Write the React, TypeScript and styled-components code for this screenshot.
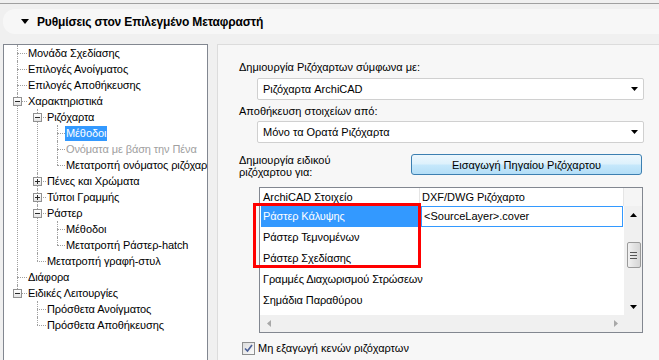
import React from 'react';
import styled, { createGlobalStyle } from 'styled-components';

const GlobalStyle = createGlobalStyle`
  html, body { margin: 0; padding: 0; background: #f0f0f0; }
  body {
    font-family: "Liberation Sans", Arial, sans-serif;
    font-size: 11px;
    color: #000;
  }
  ul { margin: 0; padding: 0; }
`;

const Page = styled.div`
  width: 659px;
  height: 360px;
  overflow: hidden;
  background: #f0f0f0;
  padding-top: 3px;
  box-sizing: border-box;
`;

const TopRule = styled.div`
  height: 1px;
  background: #a0a0a0;
`;

const HeaderBar = styled.div`
  margin: 5px 0 0 3px;
  height: 25px;
  background: #f7f7f7;
  border-radius: 12px 0 0 12px;
  display: flex;
  align-items: center;
  padding-left: 18px;
  gap: 8px;
`;

const HeaderTitle = styled.span`
  font-weight: bold;
  font-size: 12px;
  letter-spacing: -0.15px;
`;

const Main = styled.div`
  display: grid;
  grid-template-columns: 205px 1fr;
  column-gap: 9px;
  margin: 10px 0 0 3px;
  height: 330px;
`;

const TreeBox = styled.div`
  border: 1px solid #828790;
  background: #fff;
  overflow: hidden;
  box-sizing: border-box;
  white-space: nowrap;
`;

const NodeList = styled.ul`
  list-style: none;
`;

const NodeItem = styled.li<{ $level: number; $last: boolean }>`
  position: relative;
  list-style: none;
  &::before {
    content: '';
    position: absolute;
    left: ${p => 13 + p.$level * 20}px;
    top: 0;
    height: ${p => (p.$last ? '8px' : '100%')};
    border-left: 1px dotted #a0a0a0;
  }
`;

const NodeRow = styled.div<{ $level: number }>`
  position: relative;
  height: 16px;
  display: flex;
  align-items: center;
  padding-left: ${p => 13 + p.$level * 20 + 10 - p.$level}px;
  &::before {
    content: '';
    position: absolute;
    left: ${p => 13 + p.$level * 20}px;
    top: 8px;
    width: ${p => 10 - p.$level}px;
    border-top: 1px dotted #a0a0a0;
  }
`;

const Toggle = styled.span<{ $level: number }>`
  position: absolute;
  left: ${p => 13 + p.$level * 20 - 4}px;
  top: 4px;
  width: 9px;
  height: 9px;
  box-sizing: border-box;
  border: 1px solid #919191;
  background: linear-gradient(#ffffff, #e4e4e4);
  display: flex;
  z-index: 1;
`;

const NodeLabel = styled.span<{ $selected?: boolean; $disabled?: boolean }>`
  line-height: 15px;
  padding: 0 1px;
  letter-spacing: -0.1px;
  background: ${p => (p.$selected ? '#3399ff' : 'transparent')};
  color: ${p => (p.$selected ? '#fff' : p.$disabled ? '#a0a0a0' : '#000')};
  position: relative;
  z-index: 1;
`;

const RightPanel = styled.div`
  background: #f7f7f7;
  border-top: 1px solid #dcdcdc;
  border-left: 1px solid #dcdcdc;
  padding: 15px 15px 0 21px;
  display: flex;
  flex-direction: column;
`;

const FieldLabel = styled.div<{ $gap: number }>`
  line-height: 14px;
  margin-top: ${p => p.$gap}px;
`;

const Combo = styled.div<{ $gap: number }>`
  margin: ${p => p.$gap}px 0 0 18px;
  height: 22px;
  box-sizing: border-box;
  border: 1px solid #d0d0d0;
  border-radius: 2px;
  background: #fff;
  display: flex;
  align-items: center;
  justify-content: space-between;
  padding: 0 5px 0 5px;
`;

const SpecialRow = styled.div`
  margin-top: 11px;
  display: flex;
  justify-content: space-between;
  align-items: flex-start;
  padding-right: 2px;
`;

const SpecialLabel = styled.div`
  line-height: 12px;
`;

const ImportButton = styled.button`
  width: 231px;
  height: 21px;
  box-sizing: border-box;
  border: 1px solid #3c7fb1;
  border-radius: 3px;
  background: linear-gradient(#edf7fd 0%, #ddf1fc 48%, #c6e8fb 52%, #b4def7 100%);
  font-family: inherit;
  font-size: 11px;
  color: #000;
  padding: 0;
`;

const Table = styled.div`
  position: relative;
  margin: 9px 1px 0 20px;
  height: 146px;
  box-sizing: border-box;
  border: 1px solid #828790;
  background: #fff;
  display: grid;
  grid-template-columns: 1fr 18px;
  grid-template-rows: 18px 1fr 17px;
`;

const HeaderRow = styled.div`
  display: grid;
  grid-template-columns: 160px 1fr;
  border-right: 1px solid #e5e5e5;
`;

const HeaderCell = styled.div<{ $pad: number; $divider?: boolean }>`
  line-height: 18px;
  padding-left: ${p => p.$pad}px;
  border-right: ${p => (p.$divider ? '1px solid #e5e5e5' : 'none')};
`;

const HeaderFiller = styled.div`
  background: #f5f5f5;
`;

const TableBody = styled.div`
  overflow: hidden;
`;

const BodyRow = styled.div`
  display: grid;
  grid-template-columns: 160px 1fr;
  height: 21px;
`;

const NameCell = styled.div<{ $selected?: boolean }>`
  margin: 0 1px;
  padding-left: 2px;
  line-height: 21px;
  white-space: nowrap;
  letter-spacing: -0.1px;
  background: ${p => (p.$selected ? '#3399ff' : 'transparent')};
  color: ${p => (p.$selected ? '#fff' : '#000')};
`;

const EditCell = styled.div`
  margin: 0 1px;
  border: 1px solid #3399ff;
  padding-left: 2px;
  line-height: 19px;
  background: #fff;
`;

const VScroll = styled.div`
  background: #f0f0f0;
  display: flex;
  flex-direction: column;
`;

const HScroll = styled.div`
  background: #f0f0f0;
  display: flex;
  align-items: stretch;
`;

const ScrollButton = styled.div<{ $size: number }>`
  flex: 0 0 ${p => p.$size}px;
  display: flex;
  align-items: center;
  justify-content: center;
`;

const ScrollTrack = styled.div`
  flex: 1;
  display: flex;
  flex-direction: column;
  align-items: center;
`;

const Thumb = styled.div`
  margin-top: 19px;
  margin-left: 1px;
  width: 14px;
  height: 26px;
  box-sizing: border-box;
  border: 1px solid #9a9a9a;
  border-radius: 2px;
  background: linear-gradient(90deg, #f2f2f2, #e2e2e2 50%, #d6d6d6);
  display: flex;
  align-items: center;
  justify-content: center;
`;

const Corner = styled.div`
  background: #f0f0f0;
`;

const Highlight = styled.div`
  position: absolute;
  left: -7px;
  top: 15px;
  width: 168px;
  height: 65px;
  box-sizing: border-box;
  border: 3px solid #ff0000;
  pointer-events: none;
`;

const CheckRow = styled.div`
  margin: 9px 0 0 3px;
  display: flex;
  align-items: center;
  gap: 3px;
  line-height: 13px;
`;

const CheckBox = styled.span`
  width: 13px;
  height: 13px;
  box-sizing: border-box;
  border: 1px solid #8e8f8f;
  background: linear-gradient(135deg, #dcdcdc, #fbfbfb);
  display: flex;
  align-items: center;
  justify-content: center;
`;

type TreeNode = {
  label: string;
  selected?: boolean;
  disabled?: boolean;
  expanded?: boolean;
  collapsed?: boolean;
  children?: TreeNode[];
};

const tree: TreeNode[] = [
  { label: 'Μονάδα Σχεδίασης' },
  { label: 'Επιλογές Ανοίγματος' },
  { label: 'Επιλογές Αποθήκευσης' },
  {
    label: 'Χαρακτηριστικά',
    expanded: true,
    children: [
      {
        label: 'Ριζόχαρτα',
        expanded: true,
        children: [
          { label: 'Μέθοδοι', selected: true },
          { label: 'Ονόματα με βάση την Πένα', disabled: true },
          { label: 'Μετατροπή ονόματος ριζόχαρτων' },
        ],
      },
      { label: 'Πένες και Χρώματα', collapsed: true },
      { label: 'Τύποι Γραμμής', collapsed: true },
      {
        label: 'Ράστερ',
        expanded: true,
        children: [{ label: 'Μέθοδοι' }, { label: 'Μετατροπή Ράστερ-hatch' }],
      },
      { label: 'Μετατροπή γραφή-στυλ' },
    ],
  },
  { label: 'Διάφορα' },
  {
    label: 'Ειδικές Λειτουργίες',
    expanded: true,
    children: [{ label: 'Πρόσθετα Ανοίγματος' }, { label: 'Πρόσθετα Αποθήκευσης' }],
  },
];

const ToggleSign = ({ plus }: { plus: boolean }) => (
  <svg width="7" height="7" viewBox="0 0 7 7">
    <rect x="1" y="3" width="5" height="1" fill="#2b2b2b" />
    {plus && <rect x="3" y="1" width="1" height="5" fill="#2b2b2b" />}
  </svg>
);

const TreeLevel = ({ nodes, level }: { nodes: TreeNode[]; level: number }) => (
  <NodeList>
    {nodes.map((n, i) => (
      <NodeItem key={n.label + i} $level={level} $last={i === nodes.length - 1}>
        <NodeRow $level={level}>
          {(n.expanded || n.collapsed) && (
            <Toggle $level={level}>
              <ToggleSign plus={!!n.collapsed} />
            </Toggle>
          )}
          <NodeLabel $selected={n.selected} $disabled={n.disabled}>
            {n.label}
          </NodeLabel>
        </NodeRow>
        {n.children && n.expanded && <TreeLevel nodes={n.children} level={level + 1} />}
      </NodeItem>
    ))}
  </NodeList>
);

const Arrow = ({ dir, color = '#000' }: { dir: 'up' | 'down' | 'left' | 'right'; color?: string }) => {
  const pts: Record<string, string> = {
    down: '0,0 7,0 3.5,4',
    up: '0,4 7,4 3.5,0',
    left: '4,0 4,7 0,3.5',
    right: '0,0 0,7 4,3.5',
  };
  const w = dir === 'up' || dir === 'down' ? 7 : 4;
  const h = dir === 'up' || dir === 'down' ? 4 : 7;
  return (
    <svg width={w} height={h} viewBox={`0 0 ${w} ${h}`}>
      <polygon points={pts[dir]} fill={color} />
    </svg>
  );
};

const bodyRows = [
  'Ράστερ Κάλυψης',
  'Ράστερ Τεμνομένων',
  'Ράστερ Σχεδίασης',
  'Γραμμές Διαχωρισμού Στρώσεων',
  'Σημάδια Παραθύρου',
];

export default function App() {
  return (
    <Page>
      <GlobalStyle />
      <TopRule />
      <HeaderBar>
        <svg width="8" height="5" viewBox="0 0 8 5">
          <polygon points="0,0 8,0 4,5" fill="#000" />
        </svg>
        <HeaderTitle>Ρυθμίσεις στον Επιλεγμένο Μεταφραστή</HeaderTitle>
      </HeaderBar>
      <Main>
        <TreeBox>
          <TreeLevel nodes={tree} level={0} />
        </TreeBox>
        <RightPanel>
          <FieldLabel $gap={0}>Δημιουργία Ριζόχαρτων σύμφωνα με:</FieldLabel>
          <Combo $gap={4}>
            <span>Ριζόχαρτα ArchiCAD</span>
            <Arrow dir="down" />
          </Combo>
          <FieldLabel $gap={4}>Αποθήκευση στοιχείων από:</FieldLabel>
          <Combo $gap={3}>
            <span>Μόνο τα Ορατά Ριζόχαρτα</span>
            <Arrow dir="down" />
          </Combo>
          <SpecialRow>
            <SpecialLabel>
              Δημιουργία ειδικού
              <br />
              ριζόχαρτου για:
            </SpecialLabel>
            <ImportButton>Εισαγωγή Πηγαίου Ριζόχαρτου</ImportButton>
          </SpecialRow>
          <Table>
            <HeaderRow>
              <HeaderCell $pad={3} $divider>ArchiCAD Στοιχείο</HeaderCell>
              <HeaderCell $pad={2}>DXF/DWG Ριζόχαρτο</HeaderCell>
            </HeaderRow>
            <HeaderFiller />
            <TableBody>
              {bodyRows.map((r, i) => (
                <BodyRow key={r}>
                  <NameCell $selected={i === 0}>{r}</NameCell>
                  {i === 0 ? <EditCell>&lt;SourceLayer&gt;.cover</EditCell> : <div />}
                </BodyRow>
              ))}
            </TableBody>
            <VScroll>
              <ScrollButton $size={17}>
                <Arrow dir="up" />
              </ScrollButton>
              <ScrollTrack>
                <Thumb>
                  <svg width="7" height="7" viewBox="0 0 7 7">
                    <rect x="0" y="0" width="7" height="1" fill="#555" />
                    <rect x="0" y="3" width="7" height="1" fill="#555" />
                    <rect x="0" y="6" width="7" height="1" fill="#555" />
                  </svg>
                </Thumb>
              </ScrollTrack>
              <ScrollButton $size={17}>
                <Arrow dir="down" />
              </ScrollButton>
            </VScroll>
            <HScroll>
              <ScrollButton $size={17}>
                <Arrow dir="left" color="#a8a8a8" />
              </ScrollButton>
              <ScrollTrack />
              <ScrollButton $size={17}>
                <Arrow dir="right" color="#a8a8a8" />
              </ScrollButton>
            </HScroll>
            <Corner />
            <Highlight />
          </Table>
          <CheckRow>
            <CheckBox>
              <svg width="9" height="9" viewBox="0 0 9 9">
                <polyline points="1,4.5 3.5,7 8,1" fill="none" stroke="#4a5f97" strokeWidth="1.6" />
              </svg>
            </CheckBox>
            <span>Μη εξαγωγή κενών ριζόχαρτων</span>
          </CheckRow>
        </RightPanel>
      </Main>
    </Page>
  );
}
